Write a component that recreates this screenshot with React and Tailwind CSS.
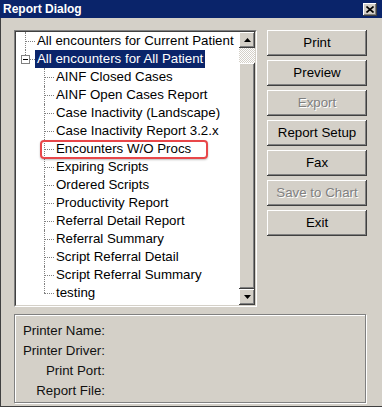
import React from 'react';

const font = { fontFamily: '"Liberation Sans", Arial, sans-serif' };

const reports = [
  'AINF Closed Cases',
  'AINF Open Cases Report',
  'Case Inactivity (Landscape)',
  'Case Inactivity Report 3.2.x',
  'Encounters W/O Procs',
  'Expiring Scripts',
  'Ordered Scripts',
  'Productivity Report',
  'Referral Detail Report',
  'Referral Summary',
  'Script Referral Detail',
  'Script Referral Summary',
  'testing',
];

const buttons = [
  { label: 'Print' },
  { label: 'Preview' },
  { label: 'Export', disabled: true },
  { label: 'Report Setup' },
  { label: 'Fax' },
  { label: 'Save to Chart', disabled: true },
  { label: 'Exit' },
];

const raised =
  'shadow-[inset_-1px_-1px_#404040,inset_1px_1px_#ffffff,inset_-2px_-2px_#808080,inset_2px_2px_#d4d0c8]';

function Arrow({ up }) {
  return (
    <svg width="7" height="4" viewBox="0 0 7 4">
      {up ? <path d="M3.5 0 L7 4 L0 4 Z" fill="#000" /> : <path d="M0 0 L7 0 L3.5 4 Z" fill="#000" />}
    </svg>
  );
}

function Scrollbar() {
  return (
    <div className="w-[16px] flex flex-col">
      <div className={`h-[16px] bg-[#d4d0c8] flex items-center justify-center ${raised}`}>
        <Arrow up />
      </div>
      <div className="h-[15px] bg-[image:repeating-conic-gradient(#d4d0c8_0%_25%,#ffffff_0%_50%)] bg-[length:2px_2px]" />
      <div className={`flex-1 bg-[#d4d0c8] ${raised}`} />
      <div className={`h-[16px] bg-[#d4d0c8] flex items-center justify-center ${raised}`}>
        <Arrow />
      </div>
    </div>
  );
}

function TreeRow({ level, label, last, selected, expander }) {
  const x = level === 0 ? 9 : 28;
  return (
    <div className="relative h-[18px] flex items-center whitespace-nowrap">
      {/* tree connector lines */}
      <span
        className="absolute w-0 border-l border-dotted border-[#808080]"
        style={{ left: x, top: 0, height: last ? (expander ? 5 : 9) : 18 }}
      />
      {expander ? (
        <>
          <span className="absolute left-[5px] top-[5px] w-[9px] h-[9px] border border-[#808080] bg-white flex items-center justify-center">
            <span className="w-[5px] h-px bg-black" />
          </span>
          <span className="absolute left-[14px] top-[9px] w-[5px] h-0 border-t border-dotted border-[#808080]" />
        </>
      ) : (
        <span
          className="absolute h-0 border-t border-dotted border-[#808080]"
          style={{ left: x, top: 9, width: 10 }}
        />
      )}
      {level === 1 && (
        <span className="absolute left-[9px] top-0 h-0" />
      )}
      <span
        className={`h-[18px] leading-[18px] px-[2px] ${
          level === 0 ? 'ml-[19px]' : 'ml-[38px]'
        } ${selected ? 'bg-[#0a246a] text-white' : 'text-black'}`}
      >
        {label}
      </span>
    </div>
  );
}

export default function App() {
  return (
    <div className="w-[382px] h-[407px] bg-[#d4d0c8] flex flex-col overflow-hidden text-[13.3px]" style={font}>
      {/* Title bar */}
      <div className="h-[18px] bg-[#0a246a] flex items-center justify-between pl-[3px] pr-[5px]">
        <span className="text-white font-bold text-[12px] leading-none">Report Dialog</span>
        <div className={`w-[14px] h-[13px] bg-[#d4d0c8] flex items-center justify-center ${raised}`}>
          <svg width="8" height="7" viewBox="0 0 8 7">
            <path d="M0.5 0.5 L7.5 6.5 M7.5 0.5 L0.5 6.5" stroke="#000" strokeWidth="1.6" />
          </svg>
        </div>
      </div>

      <div className="flex-1 flex flex-col border-l border-b border-[#404040] pl-[13px]">
        <div className="flex mt-[12px]">
          {/* Tree view */}
          <div className="w-[243px] h-[277px] border-t border-l border-[#808080] border-b border-r border-b-white border-r-white">
            <div className="h-full flex border-t border-l border-[#404040] border-b border-r border-b-[#d4d0c8] border-r-[#d4d0c8]">
              <div className="relative flex-1 bg-white overflow-hidden">
                <TreeRow level={0} label="All encounters for Current Patient" />
                <TreeRow level={0} label="All encounters for All Patient" selected last expander />
                {reports.map((r, i) => (
                  <TreeRow key={r} level={1} label={r} last={i === reports.length - 1} />
                ))}
                {/* annotation highlight */}
                <div className="absolute left-[24px] top-[108px] w-[168px] h-[19px] rounded-[4px] border-2 border-[#e8474a] shadow-[0_1px_2px_rgba(0,0,0,0.25)]" />
              </div>
              <Scrollbar />
            </div>
          </div>

          {/* Buttons */}
          <div className="ml-[10px] flex flex-col gap-[4px]">
            {buttons.map((b) => (
              <div
                key={b.label}
                className={`w-[100px] h-[26px] bg-[#d4d0c8] flex items-center justify-center ${raised} ${
                  b.disabled ? 'text-[#808080] [text-shadow:1px_1px_0_#ffffff]' : 'text-black'
                }`}
              >
                {b.label}
              </div>
            ))}
          </div>
        </div>

        {/* Printer info */}
        <div className="mt-[7px] w-[352px] h-[89px] border border-[#808080] shadow-[inset_1px_1px_#ffffff,1px_1px_#ffffff] pt-[6px]">
          {['Printer Name:', 'Printer Driver:', 'Print Port:', 'Report File:'].map((l) => (
            <div key={l} className="h-[20px] leading-[20px] w-[90px] text-right text-[#111]">
              {l}
            </div>
          ))}
        </div>
      </div>
    </div>
  );
}
